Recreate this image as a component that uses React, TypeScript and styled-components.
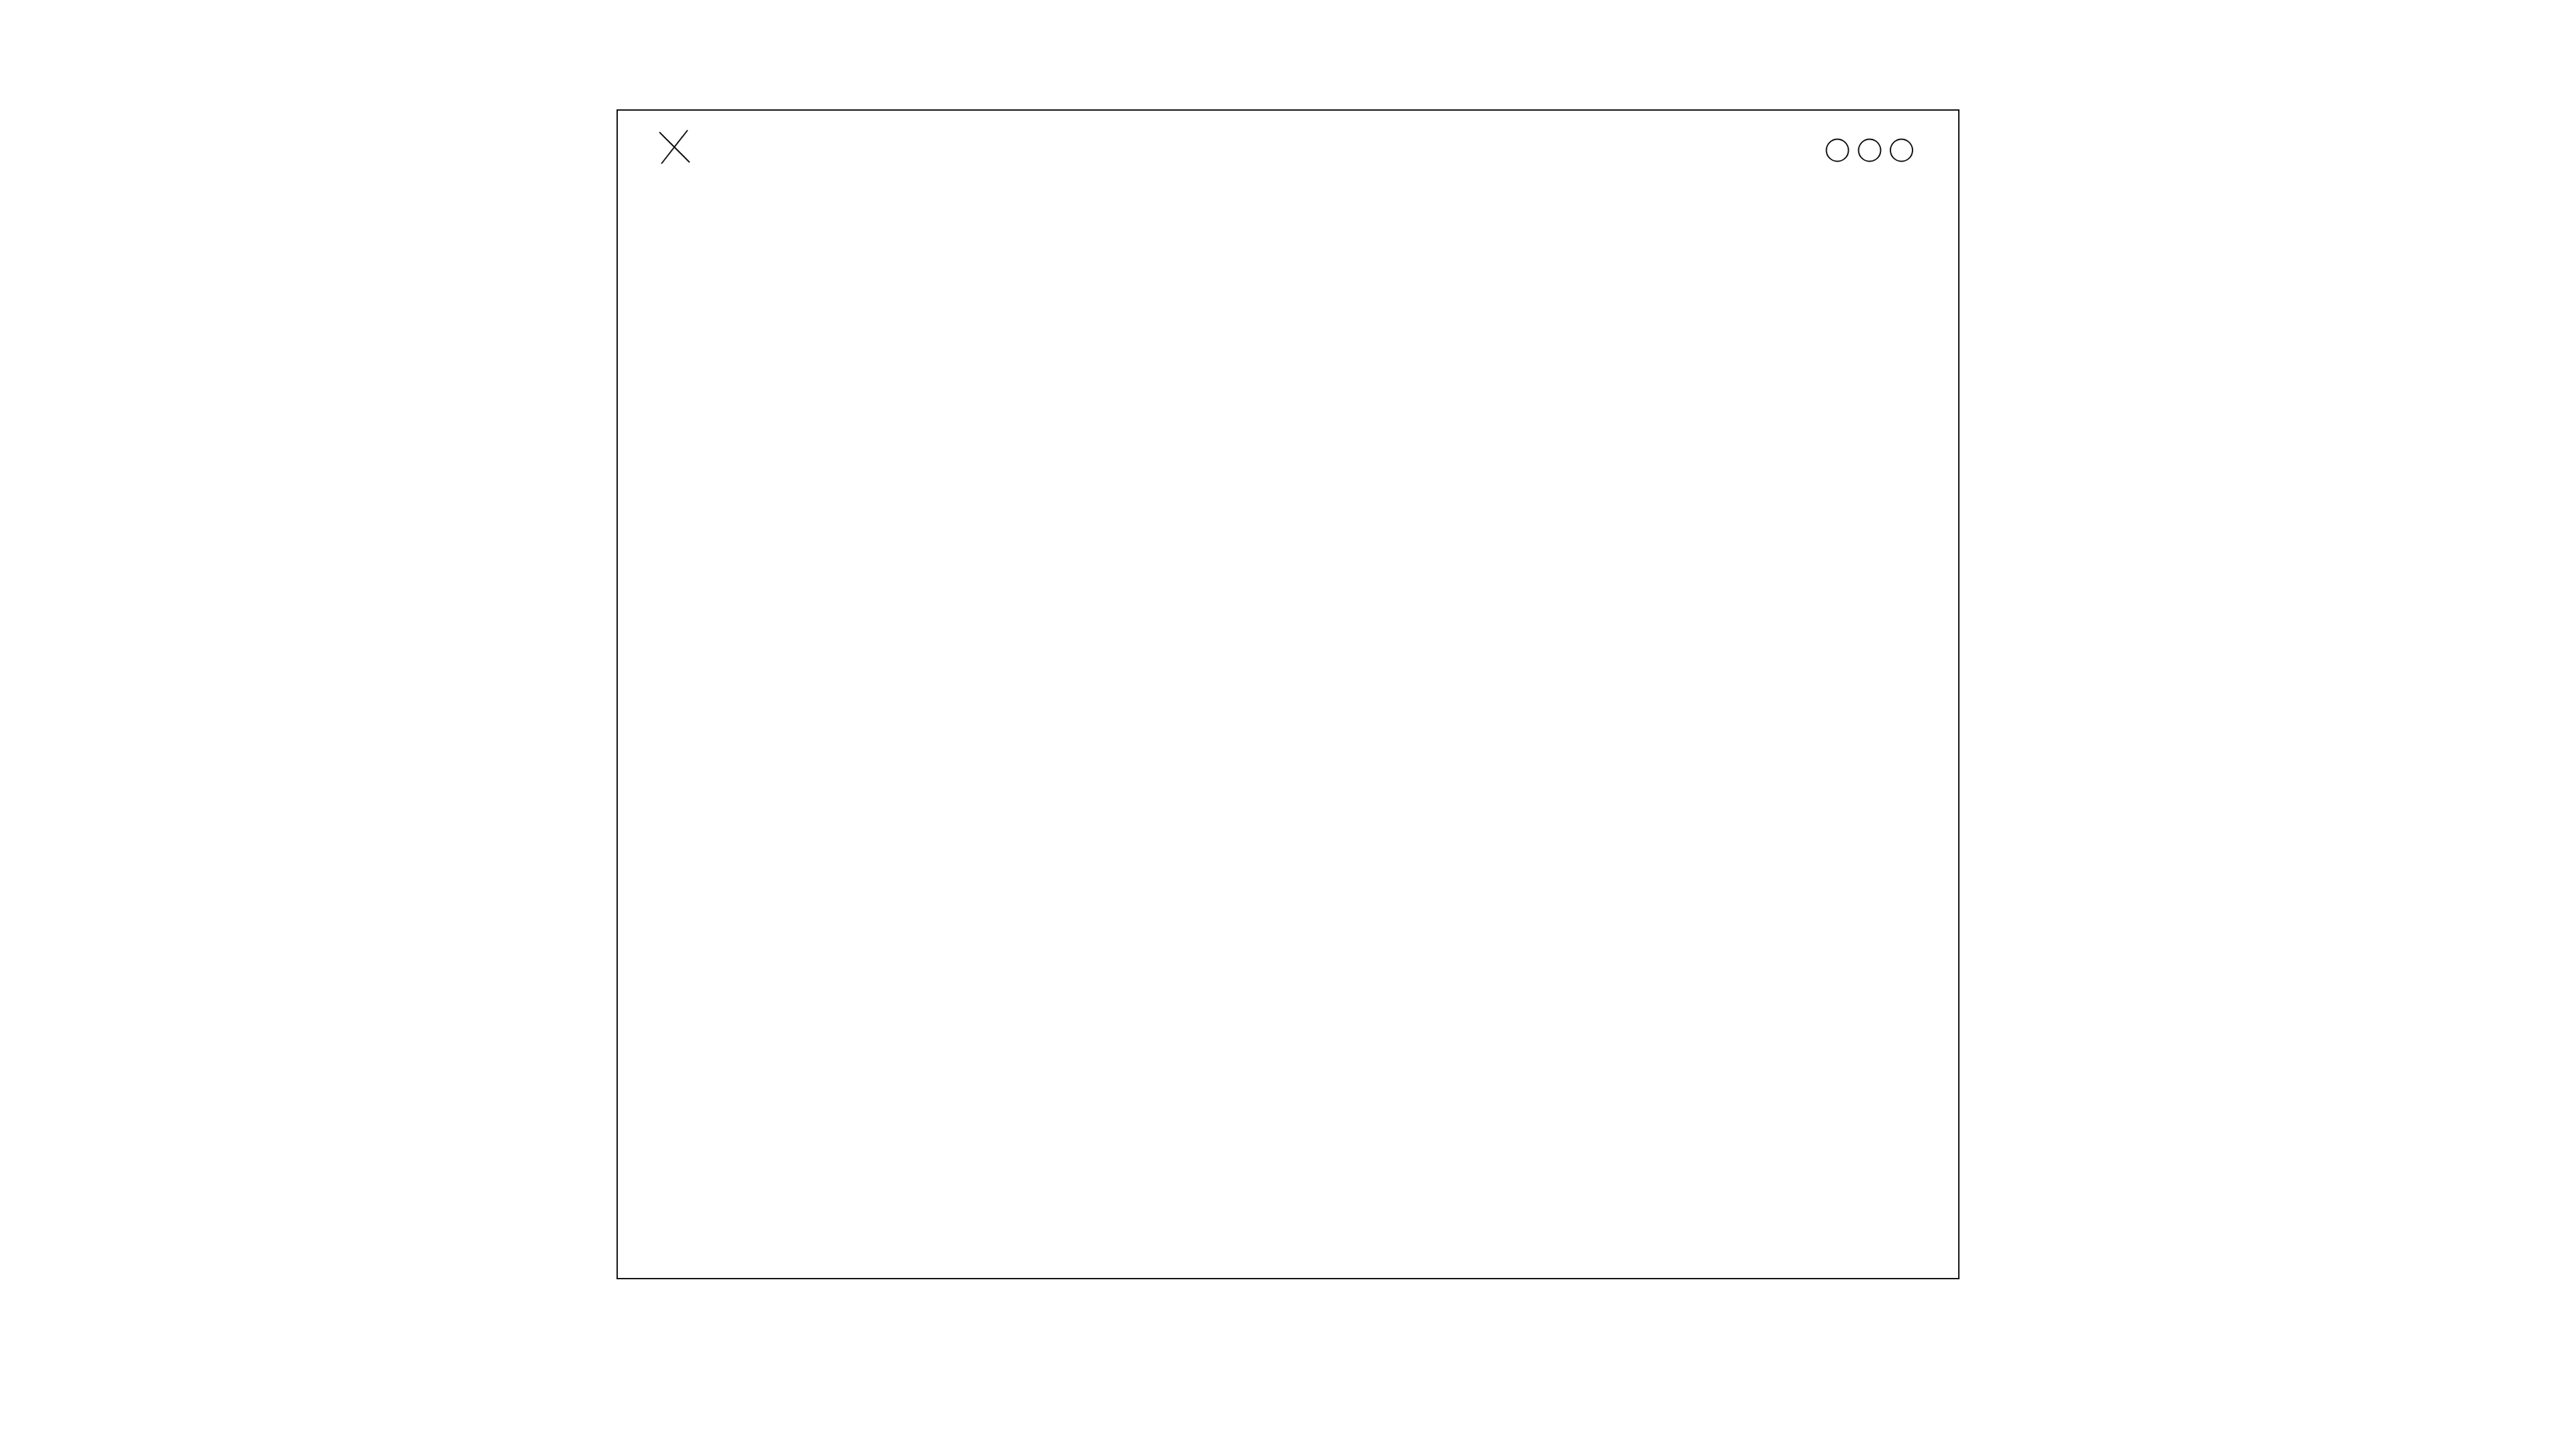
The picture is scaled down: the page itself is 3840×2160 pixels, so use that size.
import styled, { createGlobalStyle } from 'styled-components';

const GlobalStyle = createGlobalStyle`
  html, body {
    margin: 0;
    padding: 0;
    background: #ffffff;
    font-family: 'Liberation Sans', Arial, sans-serif;
  }
`;

const Page = styled.div`
  display: flex;
  justify-content: center;
  padding-top: 163px;
  min-height: 2160px;
  box-sizing: border-box;
`;

const Frame = styled.div`
  width: 2002px;
  height: 1744px;
  border: 2px solid #111111;
  box-sizing: border-box;
  display: flex;
  flex-direction: column;
`;

const Header = styled.div`
  display: flex;
  justify-content: space-between;
  align-items: flex-start;
  padding: 28px 63px 0 60px;
`;

const IconButton = styled.button<{ $offset?: number }>`
  display: flex;
  padding: 0;
  margin: ${(p) => p.$offset || 0}px 0 0 0;
  border: none;
  background: none;
  cursor: pointer;
  color: #111111;
`;

function CloseIcon() {
  return (
    <svg width="50" height="53" viewBox="0 0 50 53" fill="none" stroke="currentColor" strokeWidth="2">
      <line x1="2" y1="4" x2="47" y2="49" />
      <line x1="44" y1="1" x2="5" y2="51" />
    </svg>
  );
}

function MoreIcon() {
  return (
    <svg width="136" height="40" viewBox="0 0 136 40" fill="none" stroke="currentColor" strokeWidth="2">
      <circle cx="19" cy="20" r="16.5" />
      <circle cx="67" cy="20" r="16.5" />
      <circle cx="114.5" cy="20" r="16.5" />
    </svg>
  );
}

export default function App() {
  return (
    <>
      <GlobalStyle />
      <Page>
        <Frame>
          <Header>
            <IconButton aria-label="Close">
              <CloseIcon />
            </IconButton>
            <IconButton aria-label="More" $offset={11}>
              <MoreIcon />
            </IconButton>
          </Header>
        </Frame>
      </Page>
    </>
  );
}
